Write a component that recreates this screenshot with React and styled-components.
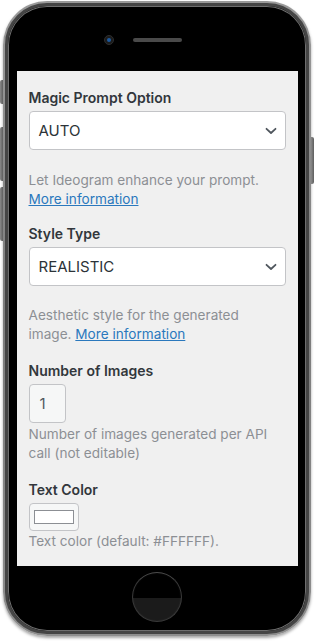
import React from "react";
import styled, { createGlobalStyle } from "styled-components";

const Global = createGlobalStyle`
  html, body { margin: 0; padding: 0; background: #ffffff; }
  body { font-family: Inter, "Noto Sans", "Liberation Sans", sans-serif; }
  * { box-sizing: border-box; }
`;

const Stage = styled.div`
  width: 314px;
  height: 644px;
  padding: 1px 0 0 3px;
`;

const Phone = styled.div`
  position: relative;
  width: 308px;
  height: 635px;
  border-radius: 44px;
  padding: 2px;
  background: linear-gradient(180deg, #9a9a9a 0%, #7c7c7c 50%, #8e8e8e 100%);
  box-shadow: 0 2px 3px rgba(0, 0, 0, 0.35);
`;

const SideButton = styled.div`
  position: absolute;
  top: ${(p) => p.$top}px;
  height: ${(p) => p.$h}px;
  width: 3px;
  ${(p) => (p.$right ? "right: -3px;" : "left: -3px;")}
  background: linear-gradient(90deg, #8a8a8a, #5e5e5e);
  border-radius: ${(p) => (p.$right ? "0 2px 2px 0" : "2px 0 0 2px")};
`;

const Body = styled.div`
  height: 100%;
  border-radius: 42px;
  background: #000;
  border: 3px solid #454545;
  box-shadow: inset 0 0 0 1px #6e6e6e;
  display: flex;
  flex-direction: column;
  align-items: center;
  overflow: hidden;
`;

const TopBezel = styled.div`
  width: 100%;
  height: 65px;
  flex: none;
  display: grid;
  grid-template-columns: 1fr 49px 1fr;
  align-items: center;
  padding-top: 3px;
`;

const Camera = styled.div`
  justify-self: end;
  margin-right: 19px;
  width: 10px;
  height: 10px;
  border-radius: 50%;
  background: #1b1b1b;
  border: 1px solid #2e2e2e;
  display: flex;
  align-items: center;
  justify-content: center;
  &::after {
    content: "";
    width: 4px;
    height: 4px;
    border-radius: 50%;
    background: #1d5aa0;
  }
`;

const Speaker = styled.div`
  height: 4px;
  border-radius: 2px;
  background: #4a4a4a;
`;

const Screen = styled.div`
  width: 281px;
  height: 495px;
  flex: none;
  background: #f0f0f0;
  padding: 17px 12px 0;
  overflow: hidden;
  display: flex;
  flex-direction: column;
`;

const BottomBezel = styled.div`
  flex: 1;
  width: 100%;
  display: flex;
  justify-content: center;
  padding-top: 6px;
`;

const HomeButton = styled.div`
  width: 50px;
  height: 50px;
  border-radius: 50%;
  border: 1.5px solid #3a3a3a;
  border-top-color: #4c4c4c;
  background: linear-gradient(180deg, #000 0%, #000 52%, #1b1b1b 52%, #1b1b1b 100%);
  box-shadow: inset 0 0 2px rgba(255, 255, 255, 0.08);
`;

const Field = styled.div`
  display: flex;
  flex-direction: column;
  margin-bottom: ${(p) => p.$mb || 0}px;
`;

const Label = styled.div`
  font-size: 14px;
  line-height: 20px;
  font-weight: 600;
  color: #32373c;
  margin-bottom: 3px;
`;

const SelectBox = styled.div`
  height: 39px;
  background: #fff;
  border: 1px solid #c3c4c7;
  border-radius: 4px;
  display: flex;
  align-items: center;
  justify-content: space-between;
  padding: 0 8px 0 9px;
  font-size: 15px;
  color: #2c3338;
`;

const Description = styled.div`
  font-size: 13.6px;
  line-height: 19px;
  color: #8c8f94;
  margin-top: ${(p) => p.$mt || 0}px;
`;

const Link = styled.a`
  color: #2a78bd;
  text-decoration: underline;
`;

const NumberBox = styled.div`
  width: 37px;
  height: 39px;
  background: #f6f7f7;
  border: 1px solid #c3c4c7;
  border-radius: 4px;
  display: flex;
  align-items: center;
  padding-left: 10px;
  font-size: 15px;
  color: #50575e;
`;

const ColorButton = styled.div`
  width: 50px;
  height: 28px;
  background: #f6f7f7;
  border: 1px solid #c3c4c7;
  border-radius: 4px;
  display: flex;
  align-items: center;
  justify-content: center;
`;

const Swatch = styled.div`
  width: 40px;
  height: 14px;
  background: ${(p) => p.$color};
  border: 1px solid #8c8f94;
`;

const Chevron = () => (
  <svg width="12" height="8" viewBox="0 0 12 8" fill="none">
    <path d="M1.5 1.8 L6 6 L10.5 1.8" stroke="#50575e" strokeWidth="1.8" strokeLinecap="round" strokeLinejoin="round" />
  </svg>
);

export default function App() {
  return (
    <>
      <Global />
      <Stage>
        <Phone>
          <SideButton $top={79} $h={24} />
          <SideButton $top={126} $h={54} />
          <SideButton $top={186} $h={54} />
          <SideButton $right $top={136} $h={47} />
          <Body>
            <TopBezel>
              <Camera />
              <Speaker />
              <span />
            </TopBezel>
            <Screen>
              <Field $mb={15}>
                <Label>Magic Prompt Option</Label>
                <SelectBox>
                  <span>AUTO</span>
                  <Chevron />
                </SelectBox>
                <Description $mt={21}>
                  Let Ideogram enhance your prompt. <Link href="#">More information</Link>
                </Description>
              </Field>
              <Field $mb={17}>
                <Label>Style Type</Label>
                <SelectBox>
                  <span>REALISTIC</span>
                  <Chevron />
                </SelectBox>
                <Description $mt={20}>
                  Aesthetic style for the generated image. <Link href="#">More information</Link>
                </Description>
              </Field>
              <Field $mb={17}>
                <Label>Number of Images</Label>
                <NumberBox>1</NumberBox>
                <Description $mt={2}>Number of images generated per API call (not editable)</Description>
              </Field>
              <Field>
                <Label>Text Color</Label>
                <ColorButton>
                  <Swatch $color="#ffffff" />
                </ColorButton>
                <Description $mt={1}>Text color (default: #FFFFFF).</Description>
              </Field>
            </Screen>
            <BottomBezel>
              <HomeButton />
            </BottomBezel>
          </Body>
        </Phone>
      </Stage>
    </>
  );
}
